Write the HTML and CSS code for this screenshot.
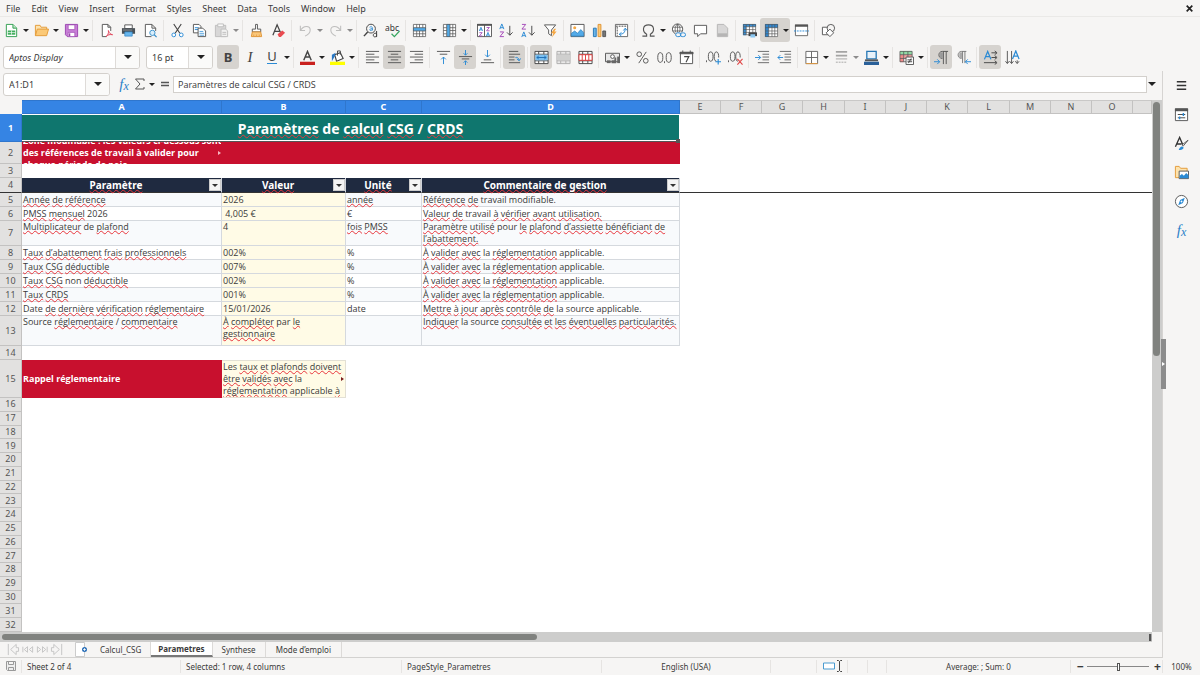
FILE: index.html
```html
<!DOCTYPE html>
<html lang="fr">
<head>
<meta charset="utf-8">
<title>Parametres</title>
<link rel="stylesheet" href="styles.css">
</head>
<body>
<div class="app">
<header class="menubar">
  <nav class="menus">
    <button>File</button><button>Edit</button><button>View</button><button>Insert</button><button>Format</button><button>Styles</button><button>Sheet</button><button>Data</button><button>Tools</button><button>Window</button><button>Help</button>
  </nav>
  <button class="close" aria-label="Close"><svg viewBox="0 0 8 8"><path d="M1.500 1.500l5 5M6.500 1.500l-5 5" stroke="#222" stroke-width="1.500"/></svg></button>
</header>

<div class="toolbar" role="toolbar" aria-label="Standard">
  <button class="tb" aria-label="New"><svg viewBox="0 0 16 16"><path d="M2.500 1.500h7l4 4v9h-11z" fill="#fff" stroke="#2f9e4f"/><path d="M9.500 1.500v4h4" fill="#bfe8c8" stroke="#2f9e4f"/><path d="M4 8h8v4.500H4z" fill="#3fae5c"/><path d="M4 10.200h8M8 8v4.500" stroke="#fff" stroke-width=".7"/></svg></button><button class="dd" aria-label="New options"></button>
  <button class="tb" aria-label="Open"><svg viewBox="0 0 16 16"><path d="M1.500 13.500v-11h5l1 2h6v3" fill="#fde3ae" stroke="#e39b38"/><path d="M1.500 13.500l2-7h12l-2 7z" fill="#fbc977" stroke="#e39b38"/></svg></button><button class="dd" aria-label="Open options"></button>
  <button class="tb" aria-label="Save"><svg viewBox="0 0 16 16"><path d="M1.500 1.500h13v13h-11l-2-2z" fill="#c77ed6" stroke="#9b45b0"/><path d="M4.500 2h7v5h-7zM4.500 10h7v4.500h-7z" fill="#fff" stroke="#9b45b0" stroke-width=".7"/><path d="M6 11v3" stroke="#9b45b0" stroke-width="1.400"/></svg></button><button class="dd" aria-label="Save options"></button>
  <i class="sep"></i>
  <button class="tb" aria-label="Export PDF"><svg viewBox="0 0 16 16"><path d="M8 14.500H3.500v-13h6l3 3v4M9.500 1.500v3h3" fill="#fff" stroke="#555"/><path d="M7.500 14.500c2-1 3-4 2.500-6.500 1 3 2 4 4.500 4.500-3-.5-5 0-7 2z" fill="none" stroke="#e0435a"/></svg></button>
  <button class="tb" aria-label="Print"><svg viewBox="0 0 16 16"><path d="M4 2h8v4H4z" fill="#fff" stroke="#555"/><path d="M1 5.500h14v6H1z" fill="#4a5157"/><path d="M2 7.500h10" stroke="#8a9198"/><path d="M4 9.500h8v4.500H4z" fill="#69b7ee" stroke="#2d7fc0" stroke-width=".7"/></svg></button>
  <button class="tb" aria-label="Print preview"><svg viewBox="0 0 16 16"><path d="M9 14.500H2.500v-13h7l4 4v3M9.500 1.500v4h4" fill="#fff" stroke="#555"/><circle cx="10" cy="10.500" r="2.800" fill="#d9eefb" stroke="#3a8fc9"/><path d="M12 12.500l2.500 2.500" stroke="#3a8fc9" stroke-width="1.300"/></svg></button>
  <i class="sep"></i>
  <button class="tb" aria-label="Cut"><svg viewBox="0 0 16 16"><path d="M4 1l6.500 10M12 1L5.500 11" fill="none" stroke="#444" stroke-width="1.200"/><circle cx="4" cy="12.700" r="2" fill="#fff" stroke="#2a8ad4"/><circle cx="12" cy="12.700" r="2" fill="#fff" stroke="#2a8ad4"/></svg></button>
  <button class="tb" aria-label="Copy"><svg viewBox="0 0 16 16"><path d="M1.500 1.500h6l2 2v7h-8z" fill="#fff" stroke="#555"/><path d="M3 5h4M3 7h4" stroke="#2a8ad4"/><path d="M6.500 5.500h5l3 3v6h-8z" fill="#fff" stroke="#555"/><path d="M8 9h4M8 11h5M8 13h5" stroke="#2a8ad4" stroke-width=".8"/></svg></button>
  <button class="tb off" aria-label="Paste"><svg viewBox="0 0 16 16"><path d="M1.500 2.500h11v12h-11z" fill="#bbb" stroke="#888"/><path d="M4 1h6v3H4z" fill="#fff" stroke="#888"/><path d="M7.500 6.500h5l2 2v6h-7z" fill="#eee" stroke="#888"/><path d="M9 10h4M9 12h4" stroke="#888"/></svg></button><button class="dd off" aria-label="Paste options"></button>
  <i class="sep"></i>
  <button class="tb" aria-label="Clone formatting"><svg viewBox="0 0 16 16"><path d="M7 1.500h2v5h3.500v3h-9v-3H7z" fill="#fff" stroke="#555"/><path d="M3.500 9.500h9l1 5h-11z" fill="#fac77b" stroke="#df9232"/><path d="M5 13.500v-1M8 13.500v-1M11 13.500v-1" stroke="#df9232"/></svg></button>
  <button class="tb" aria-label="Clear formatting"><svg viewBox="0 0 16 16"><path d="M2 13L6.500 2l4 9M3.500 9H9" fill="none" stroke="#444" stroke-width="1.300"/><path d="M7 12l5-4 3 2.500-4.500 4.500h-2z" fill="#e94b50"/></svg></button>
  <i class="sep"></i>
  <button class="tb off" aria-label="Undo"><svg viewBox="0 0 16 16"><path d="M2.500 3v5h5M2.500 8C6 2 13 2.500 13 7.500c0 3-2 5-5.500 6.500" fill="none" stroke="#888" stroke-width="1.100"/></svg></button><button class="dd off" aria-label="Undo list"></button>
  <button class="tb off" aria-label="Redo"><svg viewBox="0 0 16 16"><path d="M13.500 3v5h-5M13.500 8C10 2 3 2.500 3 7.500c0 3 2 5 5.500 6.500" fill="none" stroke="#888" stroke-width="1.100"/></svg></button><button class="dd off" aria-label="Redo list"></button>
  <i class="sep"></i>
  <button class="tb" aria-label="Find and replace"><svg viewBox="0 0 16 16"><circle cx="8.500" cy="6" r="4.700" fill="none" stroke="#444"/><path d="M5 9.500L1 14" stroke="#444" stroke-width="1.600"/><path d="M7 4.500c2-1 3-.5 3 1V8M10 6c-3-.3-3.500 2-1.800 2 1 0 1.800-.7 1.800-1.500" fill="none" stroke="#2a8ad4" stroke-width=".9"/><path d="M14.500 8.500V15M14.500 12c-1-2-3.500-1-3.500 1s2.500 2.500 3.500.5" fill="none" stroke="#333"/></svg></button>
  <button class="tb" aria-label="Spelling"><svg viewBox="0 0 16 16"><text x="0" y="8" font-size="9" fill="#333">abc</text><path d="M7 11.500l3 3 5.500-6" fill="none" stroke="#37a660" stroke-width="1.300"/></svg></button>
  <i class="sep"></i>
  <button class="tb" aria-label="Row"><svg viewBox="0 0 16 16"><path d="M1.500 1.500h13v13h-13z" fill="#fff"/><path d="M1 5h14v3.500H1z" fill="#52aae8"/><path d="M1.500 1.500h13v13h-13zM1.500 5h13M1.500 8.500h13M1.500 11.500h13M5 1.500V5M5 8.500v6M8 1.500V5M8 8.500v6M11.500 1.500V5M11.500 8.500v6" fill="none" stroke="#555" stroke-width=".8"/></svg></button><button class="dd" aria-label="Row options"></button>
  <button class="tb" aria-label="Column"><svg viewBox="0 0 16 16"><path d="M1.500 1.500h13v13h-13z" fill="#fff"/><path d="M5 1h3.500v14H5z" fill="#52aae8"/><path d="M1.500 1.500h13v13h-13zM5 1.500v13M8.500 1.500v13M11.500 1.500v13M1.500 5H5M8.500 5h6M1.500 8H5M8.500 8h6M1.500 11.500H5M8.500 11.500h6" fill="none" stroke="#555" stroke-width=".8"/></svg></button><button class="dd" aria-label="Column options"></button>
  <i class="sep"></i>
  <button class="tb" aria-label="Sort"><svg viewBox="0 0 16 16"><path d="M.5 1.500h15v13H.5zM8 1.500v13" fill="#fff" stroke="#555"/><path d="M0 1h16v2H0z" fill="#555"/><path d="M2.500 8.500l1.700-4 1.700 4M3 7.300h2.400M10 14l1.700-4 1.700 4M10.500 12.800h2.400" fill="none" stroke="#2a8ad4" stroke-width=".9"/><path d="M2.500 10.300h3L2.500 13.800h3.200M10.200 4.800h3l-3 3.500h3.200" fill="none" stroke="#a345b8" stroke-width=".9"/></svg></button>
  <button class="tb" aria-label="Sort ascending"><svg viewBox="0 0 16 16"><path d="M.8 6.500L3 1l2.200 5.500M1.500 5h3" fill="none" stroke="#2a8ad4"/><path d="M1 9.500h4L1 14.500h4.200" fill="none" stroke="#a345b8"/><path d="M11.500 3v10M8.500 10l3 3 3-3" fill="none" stroke="#444"/></svg></button>
  <button class="tb" aria-label="Sort descending"><svg viewBox="0 0 16 16"><path d="M.8 15L3 9.500 5.200 15M1.500 13.500h3" fill="none" stroke="#2a8ad4"/><path d="M1 1.500h4L1 6.500h4.200" fill="none" stroke="#a345b8"/><path d="M11.500 3v10M8.500 10l3 3 3-3" fill="none" stroke="#444"/></svg></button>
  <button class="tb" aria-label="AutoFilter"><svg viewBox="0 0 16 16"><path d="M1.500 2h12L9 7.500v6l-3-2v-4z" fill="#fff" stroke="#555"/><path d="M12 6l-3.500 5H11l-1.500 4.500L14.500 9H12l2-3z" fill="#f5a742"/></svg></button>
  <i class="sep"></i>
  <button class="tb" aria-label="Insert image"><svg viewBox="0 0 16 16"><path d="M1 1.500h14v13H1z" fill="#fff" stroke="#555"/><circle cx="5" cy="5" r="1.600" fill="#f5a742"/><path d="M1.500 14v-3l3.500-2.500L8 11l3.500-4 3 3v4z" fill="#52aae8" stroke="#2878b5" stroke-width=".7"/></svg></button>
  <button class="tb" aria-label="Insert chart"><svg viewBox="0 0 16 16"><path d="M1.500 5.500h3v9h-3z" fill="#6cb5e8" stroke="#2878b5"/><path d="M6.500 1.500h3v13h-3z" fill="#fbc977" stroke="#df9232"/><path d="M11.500 8.500h3v6h-3z" fill="#777" stroke="#555"/></svg></button>
  <button class="tb" aria-label="Pivot table"><svg viewBox="0 0 16 16"><path d="M1.500 1.500h13v13h-13z" fill="#fff" stroke="#666"/><path d="M2 3.500h12M3.500 4v10" stroke="#888" stroke-dasharray="2 1" stroke-width="1.500"/><path d="M12 6c0 4-2 6-6 6M10 8l2-2.500L14 8M8 10l-2.500 2L8 14" fill="none" stroke="#2a8ad4"/></svg></button>
  <i class="sep"></i>
  <button class="tb" aria-label="Special character"><svg viewBox="0 0 16 16"><path d="M1.500 14h4.500v-2C1 9 1.500 2 8 2s7 7 2 10v2h4.500" fill="none" stroke="#555" stroke-width="1.200"/></svg></button><button class="dd" aria-label="Special character list"></button>
  <button class="tb" aria-label="Hyperlink"><svg viewBox="0 0 16 16"><circle cx="7" cy="6.500" r="5.500" fill="#fff" stroke="#555"/><path d="M2 4.500h10M2 8.500h10M7 1v11M7 1C3.500 4 3.500 9 7 12M7 1c3.500 3 3.500 8 0 11" fill="none" stroke="#555" stroke-width=".8"/><path d="M5 10h11v5H5z" fill="#f6f5f4"/><rect x="5" y="10.500" width="5.500" height="4" rx="2" fill="none" stroke="#2a8ad4"/><rect x="10" y="10.500" width="5.500" height="4" rx="2" fill="none" stroke="#2a8ad4"/></svg></button>
  <button class="tb" aria-label="Comment"><svg viewBox="0 0 16 16"><path d="M1.500 2.500h13v9H8L5 14.500v-3H1.500z" fill="#fff" stroke="#555"/></svg></button>
  <button class="tb off" aria-label="Headers and footers"><svg viewBox="0 0 16 16"><path d="M2.500 1.500h7l4 4v9h-11z" fill="#bbb" stroke="#777"/><path d="M3 11h10v3H3z" fill="#777"/></svg></button>
  <i class="sep"></i>
  <button class="tb" aria-label="Print area"><svg viewBox="0 0 16 16"><path d="M1.500 1.500h13v11h-13z" fill="#fff"/><path d="M1 1h14v3H1zM1 4h3.500v9H1z" fill="#3a8fd4"/><path d="M1.500 1.500h13v11h-13zM1.500 4h13M1.500 7h13M1.500 10h13M4.500 1.500v11M8 1.500v11M11.500 1.500v11" fill="none" stroke="#555" stroke-width=".7"/><path d="M7 10h9v4H7z" fill="#444"/><path d="M9 12h5v3.500H9z" fill="#8cc8f2"/></svg></button>
  <span class="split"><button class="tb" aria-label="Freeze rows and columns" aria-pressed="true"><svg viewBox="0 0 16 16"><path d="M1.500 1.500h13v13h-13z" fill="#fff"/><path d="M1 1h14v4H1zM1 5h4v10H1z" fill="#2f86cf"/><path d="M1.500 1.500h13v13h-13zM1.500 5h13M1.500 8.500h13M1.500 11.500h13M5 1.500v13M8.500 1.500v13M11.500 1.500v13" fill="none" stroke="#555" stroke-width=".7"/></svg></button><button class="dd" aria-label="Freeze options"></button></span>
  <button class="tb" aria-label="Split window"><svg viewBox="0 0 16 16"><path d="M1.500 2.500h13v11h-13z" fill="#fff" stroke="#666"/><path d="M1 1.500h14v2.500H1z" fill="#555"/><path d="M0 8.500h16" stroke="#2a8ad4" stroke-dasharray="2 1"/></svg></button>
  <i class="sep"></i>
  <button class="tb" aria-label="Draw functions"><svg viewBox="0 0 16 16"><path d="M1.500 4.500h8v8h-8z" fill="#fff" stroke="#555"/><circle cx="10.500" cy="5.500" r="4" fill="#f6f5f4" stroke="#555"/><path d="M9.500 6.500l4 4-4 4-4-4z" fill="#fff" stroke="#555"/></svg></button>
</div>

<div class="toolbar" role="toolbar" aria-label="Formatting">
  <div class="combo font"><input type="text" aria-label="Font name" value="Aptos Display"><button aria-label="Font list"></button></div>
  <div class="combo size"><input type="text" aria-label="Font size" value="16 pt"><button aria-label="Size list"></button></div>
  <button class="tb glyph on" aria-label="Bold"><b>B</b></button>
  <button class="tb glyph serif" aria-label="Italic"><em>I</em></button>
  <button class="tb glyph" aria-label="Underline"><span class="ul">U</span></button><button class="dd" aria-label="Underline options"></button>
  <i class="sep"></i>
  <button class="tb" aria-label="Font color"><svg viewBox="0 0 16 16"><path d="M4 11l4-9.500L12 11M5.500 7.500h5" fill="none" stroke="#444" stroke-width="1.500"/><path d="M0 12.500h16v3.500H0z" fill="#c9211e"/></svg></button><button class="dd" aria-label="Font colors"></button>
  <button class="tb" aria-label="Background color"><svg viewBox="0 0 16 16"><path d="M5 5l6-2 3 6-7 3z" fill="#fff" stroke="#444" stroke-width="1.200"/><path d="M8 6V1h3v4" fill="none" stroke="#444"/><path d="M2 12V5l4-2-1 4z" fill="#2a78c4"/><path d="M0 12.500h16v3.500H0z" fill="#ff0"/></svg></button><button class="dd" aria-label="Background colors"></button>
  <i class="sep"></i>
  <button class="tb" aria-label="Align left"><svg viewBox="0 0 16 16"><path d="M1 1.500h14M1 4.500h9M1 7.500h14M1 10.500h9M1 13.500h14" stroke="#555"/></svg></button>
  <button class="tb on" aria-label="Center" aria-pressed="true"><svg viewBox="0 0 16 16"><path d="M1 1.500h14M4 4.500h8M1 7.500h14M4 10.500h8M1 13.500h14" stroke="#555"/></svg></button>
  <button class="tb" aria-label="Align right"><svg viewBox="0 0 16 16"><path d="M1 1.500h14M6 4.500h9M1 7.500h14M6 10.500h9M1 13.500h14" stroke="#555"/></svg></button>
  <i class="sep"></i>
  <button class="tb" aria-label="Align top"><svg viewBox="0 0 16 16"><path d="M1 1.500h14M4 4.500h8" stroke="#555"/><path d="M8 15V7.500M5.500 10L8 7.500l2.500 2.500" fill="none" stroke="#2a8ad4"/></svg></button>
  <button class="tb on" aria-label="Center vertically" aria-pressed="true"><svg viewBox="0 0 16 16"><path d="M1 7h14M4 9.500h8" stroke="#555"/><path d="M8 0v5.500M6 3.500l2 2 2-2M8 16v-4.500M6 13.500l2-2 2 2" fill="none" stroke="#2a8ad4"/></svg></button>
  <button class="tb" aria-label="Align bottom"><svg viewBox="0 0 16 16"><path d="M4 10.500h8M1 13.500h14" stroke="#555"/><path d="M8 0v7.500M5.500 5L8 7.500 10.500 5" fill="none" stroke="#2a8ad4"/></svg></button>
  <i class="sep"></i>
  <button class="tb on" aria-label="Wrap text" aria-pressed="true"><svg viewBox="0 0 16 16"><path d="M2 1.500h10M2 4.500h12M2 7.500h6M2 10.500h6M2 13.500h12" stroke="#555"/><path d="M9 8c2-.5 3.500.5 4 3M10.500 9.500l2.500 2 1.500-2.500" fill="none" stroke="#2a8ad4"/></svg></button>
  <i class="sep"></i>
  <button class="tb on" aria-label="Merge and center" aria-pressed="true"><svg viewBox="0 0 16 16"><path d="M1 1.500h14v13H1zM1 4.500h14M1 11.500h14M5 1.500v3M10.500 1.500v3M5 11.500v3M10.500 11.500v3" fill="#fff" stroke="#444"/><path d="M1.500 5h13v6h-13z" fill="#7cc0f0"/><path d="M3 8h10M5 6.500L3 8l2 1.500M11 6.500L13 8l-2 1.500" fill="none" stroke="#1d6eb5"/></svg></button>
  <button class="tb off" aria-label="Merge cells"><svg viewBox="0 0 16 16"><path d="M1 1.500h14v13H1zM1 4.500h14M1 11.500h14M5 1.500v3M10.500 1.500v3M5 11.500v3M10.500 11.500v3" fill="#ddd" stroke="#666"/><path d="M1.500 5h13v6h-13z" fill="#aaa"/></svg></button>
  <button class="tb" aria-label="Split cells"><svg viewBox="0 0 16 16"><path d="M1 1.500h14v13H1zM1 4.500h14M1 11.500h14M5 1.500v3M10.500 1.500v3M5 11.500v3M10.500 11.500v3" fill="#fff" stroke="#444"/><path d="M1 5h14v6H1zM4.500 5v6M8 5v6M11.500 5v6" fill="#fff" stroke="#dc3b3b"/></svg></button>
  <i class="sep"></i>
  <button class="tb" aria-label="Currency"><svg viewBox="0 0 16 16"><path d="M.5 3.500h15v9H.5z" fill="#e8e8e8" stroke="#555"/><circle cx="8" cy="7" r="2" fill="#fff" stroke="#555"/><path d="M7 14v-3h3V8h2v6z" fill="#666"/><path d="M13 14V7h3v7z" fill="#666"/><path d="M2 14v-3h4v3z" fill="#666"/></svg></button><button class="dd" aria-label="Currency list"></button>
  <button class="tb" aria-label="Percent"><svg viewBox="0 0 16 16"><g fill="none" stroke="#555"><circle cx="4.500" cy="4.500" r="2.500"/><circle cx="11.500" cy="11.500" r="2.500"/><path d="M12 2L4 14"/></g></svg></button>
  <button class="tb" aria-label="Number"><svg viewBox="0 0 16 16"><g fill="none" stroke="#555"><ellipse cx="3.500" cy="8" rx="2.700" ry="5.200"/><ellipse cx="12.500" cy="8" rx="2.700" ry="5.200"/><path d="M8 12v2"/></g></svg></button>
  <button class="tb" aria-label="Date"><svg viewBox="0 0 16 16"><path d="M1.500 2.500h13v12h-13z" fill="#fff" stroke="#555"/><path d="M1 2.500h14v1.500H1zM4 .5v2M12 .5v2" fill="#555" stroke="#555"/><path d="M5.500 7h5l-3 6" fill="none" stroke="#444" stroke-width="1.200"/></svg></button>
  <i class="sep"></i>
  <button class="tb" aria-label="Add decimal"><svg viewBox="0 0 16 16"><g fill="none" stroke="#555"><ellipse cx="5" cy="7" rx="2.500" ry="5"/><path d="M11 12c-3 0-3-10 0-10 2 0 2.700 3 2.500 6M.5 11v2"/></g><path d="M13 9.500v6M10 12.500h6" stroke="#2a8ad4" stroke-width="1.200"/></svg></button>
  <button class="tb" aria-label="Delete decimal"><svg viewBox="0 0 16 16"><g fill="none" stroke="#555"><ellipse cx="5" cy="7" rx="2.500" ry="5"/><path d="M10.500 12c-3 0-3-10 0-10 2 0 2.700 3 2.500 6M.5 11v2"/></g><path d="M10 9.500l5.500 6M15.500 9.500l-5.500 6" stroke="#e04545" stroke-width="1.200"/></svg></button>
  <i class="sep"></i>
  <button class="tb" aria-label="Increase indent"><svg viewBox="0 0 16 16"><path d="M3 1.500h12M8 4.500h7M8 7.500h7M8 10.500h7M3 13.500h12" stroke="#666"/><path d="M0 8h6M3.500 5.500L6 8l-2.500 2.500" fill="none" stroke="#2a8ad4"/></svg></button>
  <button class="tb" aria-label="Decrease indent"><svg viewBox="0 0 16 16"><path d="M3 1.500h12M8 4.500h7M8 7.500h7M8 10.500h7M3 13.500h12" stroke="#666"/><path d="M6.500 8H1M3.500 5.500L1 8l2.500 2.500" fill="none" stroke="#2a8ad4"/></svg></button>
  <i class="sep"></i>
  <button class="tb" aria-label="Borders"><svg viewBox="0 0 16 16"><path d="M2 1.500h12.500v13H2zM8 1.500v13M2 8h12.500" fill="#fff" stroke="#666"/><path d="M2 14.500h12.500" stroke="#e59a3d"/></svg></button><button class="dd" aria-label="Border list"></button>
  <button class="tb off" aria-label="Border style"><svg viewBox="0 0 16 16"><path d="M2 2h12M2 6h12" stroke="#555" stroke-width="2"/><path d="M2 9.500h12" stroke="#555"/><path d="M2 13h12" stroke="#555" stroke-dasharray="2 1"/></svg></button><button class="dd off" aria-label="Border styles"></button>
  <button class="tb" aria-label="Border color"><svg viewBox="0 0 16 16"><path d="M3 1.500h10v8H3z" fill="#e8f2fa" stroke="#2878b5" stroke-width="1.400"/><path d="M1 10h14v2H1z" fill="#555"/><path d="M0 12.500h16v3.500H0z" fill="#2a6099"/></svg></button><button class="dd" aria-label="Border colors"></button>
  <i class="sep"></i>
  <button class="tb" aria-label="Conditional formatting"><svg viewBox="0 0 16 16"><path d="M1 1h13v4H1z" fill="#8fd9a4"/><path d="M1 5h4v8H1z" fill="#f08a8a"/><path d="M5 5h9v4H5z" fill="#f3a0a0"/><path d="M1 1.500h13v11H1zM1 5h13M1 9h13M5 1.500v11M9.500 1.500v11" fill="none" stroke="#555" stroke-width=".8"/><path d="M7.500 7.500h8v8h-8z" fill="#fff" stroke="#555"/><path d="M9 10.500h5M9 12.500h5M13 9l-3 5" stroke="#444"/></svg></button><button class="dd" aria-label="Conditional list"></button>
  <i class="sep"></i>
  <button class="tb on" aria-label="Left-to-right" aria-pressed="true"><svg viewBox="0 0 16 16"><path d="M9 9C4 9 4 1.500 9 1.500h6M10 1.500V15M13 1.500V15" fill="none" stroke="#555"/><path d="M6.500 2.500h3v6h-3z" fill="#999"/><path d="M0 12.500h6M3.500 10l2.500 2.500L3.500 15" fill="none" stroke="#2a8ad4"/></svg></button>
  <button class="tb" aria-label="Right-to-left"><svg viewBox="0 0 16 16"><path d="M6 9C1 9 1 1.500 6 1.500h5M7 1.500V14M9.500 1.500V14" fill="none" stroke="#777"/><path d="M3.500 2.500h3v6h-3z" fill="#aaa"/><path d="M16 12.500h-6M12.500 10L10 12.500l2.500 2.500" fill="none" stroke="#2a8ad4"/></svg></button>
  <i class="sep"></i>
  <button class="tb on" aria-label="Text direction horizontal" aria-pressed="true"><svg viewBox="0 0 16 16"><path d="M1.500 10L5 1.500 8.500 10M2.700 7h4.600" fill="none" stroke="#2a8ad4" stroke-width="1.300"/><path d="M9 3h5M12.500 1L15 3l-2.500 2M9 8h5M12.500 6L15 8l-2.500 2M1 13.500h13M12.500 11.500l2.500 2-2.500 2" fill="none" stroke="#444"/></svg></button>
  <button class="tb" aria-label="Text direction vertical"><svg viewBox="0 0 16 16"><path d="M8 9.500L11.500 1l3.500 8.500M9.200 6.500h4.600" fill="none" stroke="#2a8ad4" stroke-width="1.300"/><path d="M2.500 1v13M.5 12l2 2.500 2-2.500M7 1v13M5 12l2 2.500L9 12M13 11v3M11 12l2 2.500 2-2.500" fill="none" stroke="#555"/></svg></button>
</div>

<div class="work">
<main class="doc">
  <div class="formulabar">
    <div class="combo name"><input type="text" aria-label="Name box" value="A1:D1"><button aria-label="Name list"></button></div>
    <button class="fx" aria-label="Function wizard"><em>f</em><em>x</em></button>
    <button class="mini" aria-label="Sum"><svg viewBox="0 0 12 12"><path d="M10 3V1H1.500l4.500 5-4.500 5H10V9" fill="none" stroke="#555"/></svg></button><button class="dd" aria-label="Sum options"></button>
    <button class="mini eq" aria-label="Formula"><svg viewBox="0 0 12 12"><path d="M2 4.500h8M2 7.500h8" stroke="#555" stroke-width="1.400"/></svg></button>
    <input class="formula" type="text" aria-label="Formula input" value="Paramètres de calcul CSG / CRDS">
    <button class="dd big" aria-label="Expand formula bar"></button>
  </div>

  <div class="sheet-area">
    <div class="viewport">
    <table class="sheet">
      <colgroup><col class="c-h"><col class="c-a"><col class="c-b"><col class="c-c"><col class="c-d"><col class="c-n" span="3"><col class="c-w"><col class="c-n" span="3"><col class="c-w"><col class="c-n" span="3"><col></colgroup>
      <thead>
      <tr class="cols"><td></td><th class="sel">A</th><th class="sel">B</th><th class="sel">C</th><th class="sel">D</th><th>E</th><th>F</th><th>G</th><th>H</th><th>I</th><th>J</th><th>K</th><th>L</th><th>M</th><th>N</th><th>O</th><th></th></tr>
      </thead>
      <tbody>
      <tr class="r1"><th class="sel">1</th><td colspan="4" class="title"><div class="frame"><span class="sp">Paramètres</span> de <span class="sp">calcul</span> <span class="sp">CSG</span> / <span class="sp">CRDS</span><i class="handle"></i></div></td><td colspan="12"></td></tr>
      <tr class="r2"><th>2</th><td class="red more"><div class="clip">Zone modifiable : les valeurs ci-dessous sont<br>des références de travail à valider pour<br>chaque période de paie.</div></td><td colspan="3" class="red"></td><td colspan="12"></td></tr>
      <tr><th>3</th><td colspan="16"></td></tr>
      <tr class="r4"><th>4</th><td class="head"><div><span class="sp">Paramètre</span><button aria-label="Filter Paramètre"></button></div></td><td class="head"><div><span class="sp">Valeur</span><button aria-label="Filter Valeur"></button></div></td><td class="head"><div><span class="sp">Unité</span><button aria-label="Filter Unité"></button></div></td><td class="head"><div><span class="sp">Commentaire de gestion</span><button aria-label="Filter Commentaire"></button></div></td><td colspan="12"></td></tr>
      <tr class="d alt"><th>5</th><td><span class="sp">Année</span> <span class="sp">de</span> <span class="sp">référence</span></td><td class="v">2026</td><td><span class="sp">année</span></td><td><span class="sp">Référence</span> <span class="sp">de</span> travail modifiable.</td><td colspan="12" class="e"></td></tr>
      <tr class="d"><th>6</th><td><span class="sp">PMSS</span> <span class="sp">mensuel</span> 2026</td><td class="v">&nbsp;4,005 €</td><td>€</td><td><span class="sp">Valeur</span> <span class="sp">de</span> travail <span class="sp">à</span> <span class="sp">vérifier</span> <span class="sp">avant</span> <span class="sp">utilisation.</span></td><td colspan="12" class="e"></td></tr>
      <tr class="d alt r7"><th>7</th><td><span class="sp">Multiplicateur</span> de <span class="sp">plafond</span></td><td class="v">4</td><td><span class="sp">fois</span> <span class="sp">PMSS</span></td><td><span class="sp">Paramètre</span> <span class="sp">utilisé</span> pour <span class="sp">le</span> <span class="sp">plafond</span> <span class="sp">d’assiette</span> <span class="sp">bénéficiant</span> <span class="sp">de</span> <span class="sp">l’abattement.</span></td><td colspan="12" class="e"></td></tr>
      <tr class="d"><th>8</th><td><span class="sp">Taux</span> <span class="sp">d’abattement</span> <span class="sp">frais</span> <span class="sp">professionnels</span></td><td class="v">002%</td><td>%</td><td><span class="sp">À</span> <span class="sp">valider</span> <span class="sp">avec</span> la <span class="sp">réglementation</span> applicable.</td><td colspan="12" class="e"></td></tr>
      <tr class="d alt"><th>9</th><td><span class="sp">Taux</span> <span class="sp">CSG</span> <span class="sp">déductible</span></td><td class="v">007%</td><td>%</td><td><span class="sp">À</span> <span class="sp">valider</span> <span class="sp">avec</span> la <span class="sp">réglementation</span> applicable.</td><td colspan="12" class="e"></td></tr>
      <tr class="d"><th>10</th><td><span class="sp">Taux</span> <span class="sp">CSG</span> non <span class="sp">déductible</span></td><td class="v">002%</td><td>%</td><td><span class="sp">À</span> <span class="sp">valider</span> <span class="sp">avec</span> la <span class="sp">réglementation</span> applicable.</td><td colspan="12" class="e"></td></tr>
      <tr class="d alt"><th>11</th><td><span class="sp">Taux</span> <span class="sp">CRDS</span></td><td class="v">001%</td><td>%</td><td><span class="sp">À</span> <span class="sp">valider</span> <span class="sp">avec</span> la <span class="sp">réglementation</span> applicable.</td><td colspan="12" class="e"></td></tr>
      <tr class="d"><th>12</th><td>Date <span class="sp">de</span> <span class="sp">dernière</span> <span class="sp">vérification</span> <span class="sp">réglementaire</span></td><td class="v">15/01/2026</td><td>date</td><td><span class="sp">Mettre</span> <span class="sp">à</span> <span class="sp">jour</span> <span class="sp">après</span> <span class="sp">contrôle</span> <span class="sp">de</span> la source applicable.</td><td colspan="12" class="e"></td></tr>
      <tr class="d alt r13"><th>13</th><td>Source <span class="sp">réglementaire</span> / <span class="sp">commentaire</span></td><td class="v"><span class="sp">À</span> <span class="sp">compléter</span> par <span class="sp">le</span> <span class="sp">gestionnaire</span></td><td></td><td><span class="sp">Indiquer</span> la source <span class="sp">consultée</span> <span class="sp">et</span> <span class="sp">les</span> <span class="sp">éventuelles</span> <span class="sp">particularités.</span></td><td colspan="12" class="e"></td></tr>
      <tr><th>14</th><td colspan="16"></td></tr>
      <tr class="r15"><th>15</th><td class="red">Rappel réglementaire</td><td class="note more"><div class="clip">Les <span class="sp">taux</span> <span class="sp">et</span> <span class="sp">plafonds</span> <span class="sp">doivent</span><br><span class="sp">être</span> <span class="sp">validés</span> <span class="sp">avec</span> la<br><span class="sp">réglementation</span> applicable <span class="sp">à</span></div></td><td colspan="14"></td></tr>
      <tr class="f"><th>16</th><td colspan="16"></td></tr>
      <tr class="f"><th>17</th><td colspan="16"></td></tr>
      <tr class="f"><th>18</th><td colspan="16"></td></tr>
      <tr class="f"><th>19</th><td colspan="16"></td></tr>
      <tr class="f"><th>20</th><td colspan="16"></td></tr>
      <tr class="f"><th>21</th><td colspan="16"></td></tr>
      <tr class="f"><th>22</th><td colspan="16"></td></tr>
      <tr class="f"><th>23</th><td colspan="16"></td></tr>
      <tr class="f"><th>24</th><td colspan="16"></td></tr>
      <tr class="f"><th>25</th><td colspan="16"></td></tr>
      <tr class="f"><th>26</th><td colspan="16"></td></tr>
      <tr class="f"><th>27</th><td colspan="16"></td></tr>
      <tr class="f"><th>28</th><td colspan="16"></td></tr>
      <tr class="f"><th>29</th><td colspan="16"></td></tr>
      <tr class="f"><th>30</th><td colspan="16"></td></tr>
      <tr class="f"><th>31</th><td colspan="16"></td></tr>
      <tr class="f"><th>32</th><td colspan="16"></td></tr>
      </tbody>
    </table>
    </div>
    <div class="vscroll"><i></i></div>
  </div>
  <div class="hscroll"><i class="thumb"></i><i class="grip"></i></div>

  <div class="tabs">
    <div class="tabnav">
      <button aria-label="First sheet"><svg viewBox="0 0 14 14"><path d="M2.500 1v12M11 1.500L5 7l6 5.500V9h2.500V5H11z" fill="none" stroke="#c4c4c4"/></svg></button>
      <button aria-label="Previous sheet"><svg viewBox="0 0 14 14"><path d="M2 4v6M7 4L3.500 7 7 10zM12.500 4L9 7l3.500 3z" fill="none" stroke="#c4c4c4"/></svg></button>
      <button aria-label="Next sheet"><svg viewBox="0 0 14 14"><path d="M12 4v6M7 4l3.500 3L7 10zM1.500 4L5 7l-3.500 3z" fill="none" stroke="#c4c4c4"/></svg></button>
      <button aria-label="Last sheet"><svg viewBox="0 0 14 14"><path d="M11.500 1v12M3 1.500L9 7l-6 5.500V9H.5V5H3z" fill="none" stroke="#c4c4c4"/></svg></button>
    </div>
    <button class="add" aria-label="Add sheet"><svg viewBox="0 0 14 14"><path d="M1.500 0h9v14h-9z" fill="#fff" stroke="#ccc"/><circle cx="10.500" cy="7" r="2.500" fill="#2a6fb8"/><path d="M9.300 7h2.400M10.500 5.800v2.400" stroke="#fff"/></svg></button>
    <button class="tab t1">Calcul_CSG</button>
    <button class="tab active">Parametres</button>
    <button class="tab t3">Synthese</button>
    <button class="tab t4">Mode d’emploi</button>
  </div>
</main>

<aside class="sidebar">
  <button aria-label="Sidebar settings"><svg viewBox="0 0 16 16"><path d="M3 4h10M3 8h10M3 12h10" stroke="#333" stroke-width="1.500"/></svg></button>
  <button aria-label="Properties"><svg viewBox="0 0 16 16"><path d="M1.500 2h13v12.500h-13z" fill="#fff" stroke="#555"/><path d="M1 1.500h14v3H1z" fill="#555"/><path d="M4 8h8M4 11.500h8" stroke="#444"/><path d="M10 6.500v3M6 10v3" stroke="#2a8ad4" stroke-width="1.500"/></svg></button>
  <button aria-label="Styles"><svg viewBox="0 0 16 16"><path d="M1.500 11.500L6 1.500l3.500 8M3 8.500h5" fill="none" stroke="#333" stroke-width="1.400"/><path d="M15 4.500l-5 6-1.500-1z" fill="#fff" stroke="#555"/><path d="M5 15c1-3 3-4.500 4.500-3.500s.5 3.500-4.500 3.500z" fill="#2a8ad4"/></svg></button>
  <button aria-label="Gallery"><svg viewBox="0 0 16 16"><path d="M1.500 13.500v-12h4l1.500 2h7v10z" fill="#fde3ae" stroke="#e39b38"/><path d="M5.500 6.500h10v8h-10z" fill="#fff" stroke="#555"/><path d="M6 14v-2.500l2.500-2 2 2 2.500-3 2.500 2.500v3z" fill="#2a8ad4"/></svg></button>
  <button aria-label="Navigator"><svg viewBox="0 0 16 16"><circle cx="8" cy="8" r="6.500" fill="#fff" stroke="#555"/><path d="M11.500 4L9.500 9.500 4.500 12l2-5.500z" fill="#2a8ad4"/><circle cx="8" cy="8" r="1" fill="#fff"/></svg></button>
  <button class="fx" aria-label="Functions"><em>f</em><em>x</em></button>
  <i class="pull"></i>
</aside>
</div>

<footer class="status">
  <span class="mid"><svg viewBox="0 0 12 12"><path d="M1.500 1.500h9v9h-8l-1-1zM3.500 1.500v3h5v-3M3.500 10.500v-3h5v3" fill="#eee" stroke="#999"/></svg></span>
  <span>Sheet 2 of 4</span>
  <span>Selected: 1 row, 4 columns</span>
  <span>PageStyle_Parametres</span>
  <span class="mid">English (USA)</span>
  <span></span>
  <span class="ins"><svg viewBox="0 0 22 12"><path d="M1.500 3h11v6h-11z" fill="#fff" stroke="#4a9bd0"/><path d="M15 .5h1.500l1 1 1-1H20M17.500 1.500v9M15 11.500h1.500l1-1 1 1H20" fill="none" stroke="#444"/></svg></span>
  <span></span>
  <span></span>
  <span class="mid">Average: ; Sum: 0</span>
  <span class="zoom"><button aria-label="Zoom out">−</button><input type="range" min="0" max="100" value="50" aria-label="Zoom"><button aria-label="Zoom in">+</button></span>
  <span class="mid">100%</span>
</footer>
</div>
</body>
</html>
```
FILE: styles.css
```css
* { box-sizing: border-box; }
html, body { height: 100%; margin: 0; }
body { font-family: "Noto Sans", "Open Sans", sans-serif; font-size: 9px; color: #3a3a3a; background: #f6f5f4; }
button, input { font: inherit; color: inherit; border: 0; margin: 0; padding: 0; background: none; border-radius: 0; }
svg text { font-family: "Noto Sans", sans-serif; }

.app { display: flex; flex-direction: column; height: 100vh; overflow: hidden; }

.menubar { display: flex; justify-content: space-between; align-items: center; height: 16px; padding-right: 6px; }
.menus { display: flex; padding-left: 6px; gap: 11px; }
.close { display: flex; }
.close svg { width: 9px; height: 9px; }

.toolbar { display: flex; align-items: center; height: 27px; border-top: 1px solid #eae9e7; }
.toolbar + .toolbar { height: 28px; border-top: 0; padding-left: 3px; }
.tb { flex: none; display: flex; align-items: center; justify-content: center; width: 22px; height: 24px; border-radius: 3px; }
.tb svg { width: 15px; height: 15px; }
.on, .split { background: #d6d3cf; }
.split { display: flex; border-radius: 3px; }
.off { opacity: .5; }
.dd { flex: none; display: flex; align-items: center; justify-content: center; width: 8px; height: 24px; }
.dd::before, .combo button::before { content: ""; border: 3px solid transparent; border-top-color: #222; border-bottom: 0; }
.sep { flex: none; width: 1px; height: 21px; margin: 0 2px; background: #e6e4e2; }
.glyph { font-size: 13px; line-height: 16px; color: #444; }
.serif { font-family: "Liberation Serif", serif; font-size: 15px; }
.ul { border-bottom: 1px solid #2a8ad4; line-height: 13px; }

.combo { flex: none; display: flex; height: 23px; border: 1px solid #d3d0cc; border-radius: 3px; background: #fff; overflow: hidden; }
.combo input { flex: 1; min-width: 0; padding: 0 5px; outline: 0; }
.combo button { width: 24px; display: flex; align-items: center; justify-content: center; border-left: 1px solid #dedbd8; background: #fafaf9; }
.combo button::before { border-width: 4px 4px 0; }
.font { width: 137px; margin-right: 6px; }
.font input { font-style: italic; }
.size { width: 67px; margin-right: 4px; }

.work { flex: 1; display: flex; min-height: 0; }
.doc { flex: 1; display: flex; flex-direction: column; min-width: 0; }
.formulabar { display: flex; align-items: center; height: 29px; padding: 1px 6px 4px 3px; }
.name { width: 107px; margin-right: 6px; }
.fx { display: flex; align-items: center; justify-content: center; width: 16px; font-family: "Liberation Serif", serif; font-size: 15px; line-height: 16px; color: #2a80c8; }
.fx em + em { font-size: 12px; line-height: 12px; padding-top: 4px; }
.mini { display: flex; width: 16px; justify-content: center; }
.mini svg { width: 12px; height: 12px; }
.eq { width: 17px; }
.formula { flex: 1; min-width: 0; height: 17px; margin-right: 1px; padding: 0 4px; border: 1px solid #d3d0cc; background: #fff; outline: 0; font-family: "Open Sans", sans-serif; }
.big::before { border-width: 4px 4px 0; }

.sheet-area { flex: 1; display: flex; min-height: 0; }
.viewport { flex: 1; min-width: 0; overflow: hidden; background: #fff; }
.sheet { width: 100%; height: 100%; table-layout: fixed; border-collapse: separate; border-spacing: 0; line-height: 12px; font-family: "Open Sans", sans-serif; }
.c-h { width: 22px; }
.c-a { width: 200px; }
.c-b { width: 124px; }
.c-c { width: 76px; }
.c-d { width: 258px; }
.c-n { width: 41px; }
.c-w { width: 42px; }
.sheet tr { height: 14px; }
.sheet .f { height: auto; }
.sheet td { padding: 0 1px; }
.sheet th { padding: 0; font-family: "Noto Sans", sans-serif; font-weight: 400; color: #555; background: #e2e1e0; border-right: 1px solid #c3c2c1; border-bottom: 1px solid #c3c2c1; }
.cols th { border-top: 1px solid #c9c8c7; }
.cols td { background: #f6f5f4; }
.sheet th.sel { color: #fff; font-weight: 700; background: #3584e4; border-color: #2f76cd; }
.sheet .r1 { height: 28px; }
.sheet .r2 { height: 22px; }
.sheet .r4 { height: 15px; }
.sheet .r7 { height: 25px; }
.sheet .r13 { height: 30px; }
.sheet .r15 { height: 38px; }

.sheet .title { padding: 0; background: #0f766e; border-bottom: 1px solid #555; color: #fff; font-family: "Noto Sans", sans-serif; font-size: 14px; font-weight: 700; text-align: center; }
.frame { position: relative; height: 27px; line-height: 27px; border: 1px solid #fff; border-left: 0; }
.handle { position: absolute; right: -1px; bottom: -3px; width: 4px; height: 4px; background: #555; }
.sp { text-decoration: underline wavy #e8363d 1px; text-underline-offset: 0; text-decoration-skip-ink: none; }

.red { background: #c8102e; color: #fff; font-weight: 700; }
.clip { display: flex; overflow: hidden; white-space: nowrap; line-height: 12px; }
.r2 .clip { display: grid; height: 22px; align-content: center; }
.sheet .more { position: relative; }
.more::after { content: ""; position: absolute; right: 1px; top: 50%; border: 2px solid transparent; border-left: 3px solid #f6b9c2; border-right: 0; margin-top: -2px; }
.sheet .note { background: #fffbe6; border: 1px solid #e3e0d4; border-left: 0; }
.note .clip { display: block; height: 36px; }
.note::after { border-left-color: #7a1c1c; }

.r4 th, .r4 td { border-bottom: 1px solid #333; }
.head { background: #1f2a40; color: #fff; font-family: "Noto Sans", sans-serif; font-weight: 700; border-right: 1px solid #cfd3da; }
.sheet .head { padding-right: 0; }
.head div { display: flex; align-items: center; height: 13px; font-size: 10px; }
.head div > span { flex: 1; text-align: center; }
.head button { display: flex; align-items: center; justify-content: center; width: 12px; height: 12px; background: #f4f4f4; border: 1px solid #ccc; }
.head button::before { content: ""; border: 3px solid transparent; border-top-color: #333; border-bottom: 0; }

.d td { vertical-align: top; border-right: 1px solid #d5d9de; border-bottom: 1px solid #d5d9de; }
.sheet .d:not(.r7):not(.r13) td { padding-top: 1px; }
.alt td { background: #f8fafc; }
.d .v { background: #fffbe6; }
.d .e { background: #fff; border: 0; }

.vscroll { width: 10px; padding: 2px 2px 0 1px; background: #cdcdcc; }
.vscroll i { display: block; height: 48%; border-radius: 4px; background: #80827f; }
.hscroll { display: flex; justify-content: space-between; align-items: center; height: 10px; margin-right: 10px; padding-left: 2px; background: #cdcdcc; }
.thumb { width: 46.5%; height: 6px; border-radius: 3px; background: #80827f; }
.grip { width: 3px; height: 7px; background: #555; border-right: 1px solid #aaa; }

.tabs { display: flex; height: 16px; padding-left: 5px; border-bottom: 1px solid #d3d2d0; font-size: 8px; }
.tabnav { display: flex; align-items: center; width: 69px; }
.tabnav button, .add { display: flex; align-items: center; }
.tabnav svg { width: 15px; height: 13px; }
.add svg { width: 14px; height: 15px; }
.tab { padding: 0 9px; border-right: 1px solid #dcdad8; }
.t1 { padding-left: 12px; }
.active { padding: 0 7px; background: #fff; border-bottom: 2px solid #777; font-weight: 700; }
.t4 { padding: 0 10px; }

.sidebar { position: relative; width: 38px; display: flex; flex-direction: column; align-items: center; gap: 9px; padding-top: 4px; border-left: 1px solid #d6d4d2; }
.sidebar button { display: flex; width: 20px; height: 20px; align-items: center; justify-content: center; }
.sidebar svg { width: 15px; height: 15px; }
.pull { position: absolute; left: -2px; top: 268px; width: 5px; height: 50px; background: #8c8c8c; }
.pull::after { content: ""; position: absolute; left: 1px; top: 23px; border: 2px solid transparent; border-left: 3px solid #fff; border-right: 0; }

.status { display: grid; grid-template-columns: 22px 159px 221fr 200fr 169fr 46fr 31px 20px 19px 184fr 92px 37px; align-items: center; height: 17px; font-size: 8px; }
.status > span { height: 13px; line-height: 13px; padding-left: 5px; border-right: 1px solid #e6e4e2; white-space: nowrap; }
.status > span:last-child { border: 0; }
.status .mid { padding: 0; text-align: center; }
.mid svg { width: 12px; height: 12px; }
.ins svg { width: 22px; height: 12px; }
.zoom { display: flex; align-items: center; }
.zoom button { width: 9px; font-size: 12px; line-height: 12px; font-weight: 700; }
.zoom input { appearance: none; flex: 1; min-width: 0; height: 1px; margin: 0 4px 0 2px; background: #888; }
.zoom input::-webkit-slider-thumb { appearance: none; width: 3px; height: 8px; border: 1px solid #555; background: #fff; }
```
